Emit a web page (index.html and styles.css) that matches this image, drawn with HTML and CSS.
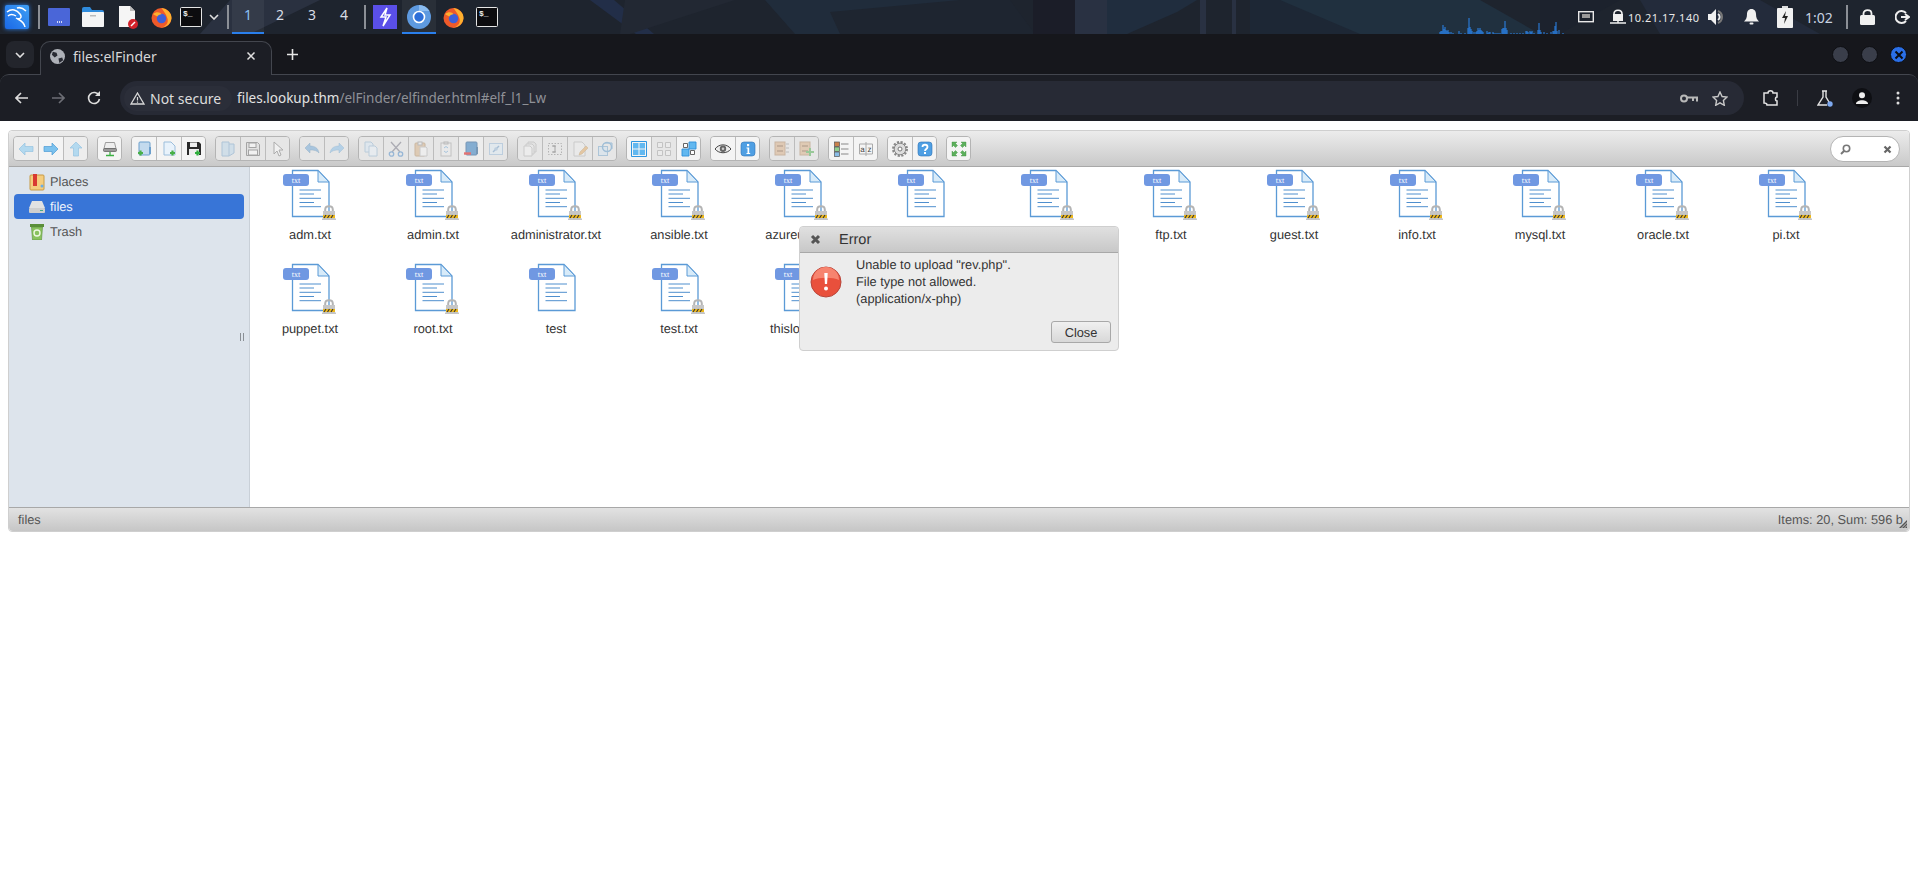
FILE: index.html
```html
<!DOCTYPE html>
<html lang="en">

<head>
    <meta charset="UTF-8">
    <title>files:elFinder</title>
    <link rel="stylesheet" href="styles.css">
</head>

<body>
    <svg class="defs" width="0" height="0">
        <defs>
            <!-- file with tag -->
            <symbol id="file" viewBox="0 0 56 52">
                <path d="M10.5 2.5H36L47 14V48.5H10.5Z" fill="#fff" stroke="#5b9ad6" stroke-width="1.3" />
                <path d="M36 2.5L47 14H36Z" fill="#d8ebf9" stroke="#5b9ad6" />
                <path d="M17.5 22H39M17.5 26H32M17.5 30.3H39M17.5 34.5H32M17.5 38.7H39" stroke="#4f8fce" stroke-width="1" fill="none" />
                <rect x="1" y="6" width="26" height="12" rx="3" fill="#7098e2" />
                <text x="14" y="15" class="tag">txt</text>
            </symbol>
            <symbol id="lock" viewBox="0 0 14 15">
                <path d="M3.2 7V4.5C3.200 0 10.800 0 10.800 4.500V7" fill="none" stroke="#b4b4b4" stroke-width="2" />
                <rect x="1" y="6" width="12" height="8" fill="#c6c6c6" />
                <rect x="1" y="10" width="12" height="3" fill="#eeb91c" />
                <path d="M2 13l2-3M5.500 13l2-3M9 13l2-3" stroke="#333" stroke-width="1.100" />
                <rect x="0" y="13.500" width="14" height="1.500" fill="#c4c4c4" />
            </symbol>

            <!-- toolbar -->
            <symbol id="t-back" viewBox="0 0 16 16"><path d="M1 8l6-6v3.500h8v5H7V14z" fill="#8ccbf0" stroke="#5ca8da" stroke-width=".7" /></symbol>
            <symbol id="t-fwd" viewBox="0 0 16 16"><path d="M15 8L9 2v3.500H1v5h8V14z" fill="#7cc2ee" stroke="#4c9bd4" stroke-width=".7" /></symbol>
            <symbol id="t-up" viewBox="0 0 16 16"><path d="M8 1l6 6h-3.500v8h-5V7H2z" fill="#8ccbf0" stroke="#5ca8da" stroke-width=".7" /></symbol>
            <symbol id="t-net" viewBox="0 0 16 16"><path d="M3.500 1.500h9l1.500 6H2z" fill="#eee" stroke="#888" stroke-width=".8" /><rect x="1.500" y="7.500" width="13" height="3" rx="1" fill="#999" stroke="#666" stroke-width=".8" /><path d="M8 11v3M4 14.500h8" stroke="#3cb043" stroke-width="1.300" /></symbol>
            <symbol id="t-mkdir" viewBox="0 0 16 16"><rect x="3" y="1" width="11" height="13" rx="1" fill="#c3daee" stroke="#6c9fcc" /><path d="M14 6v7" stroke="#6c9fcc" stroke-width="2" /><path d="M4.500 9.500v5M2 12h5" stroke="#48b048" stroke-width="2.200" /></symbol>
            <symbol id="t-mkfile" viewBox="0 0 16 16"><path d="M3 1h7l4 4v9H3z" fill="#e8f2fb" stroke="#9cbedc" /><path d="M11.500 9.500v5M9 12h5" stroke="#48b048" stroke-width="2.200" /></symbol>
            <symbol id="t-upload" viewBox="0 0 16 16"><path d="M1 1h12l2 2v11H1z" fill="#2a2a2a" /><rect x="4" y="1.500" width="7" height="4.500" fill="#eee" /><rect x="3" y="8" width="10" height="6" fill="#eee" /><path d="M11.500 9.500v5M9 12h5" stroke="#2fae3c" stroke-width="2.200" /></symbol>
            <symbol id="t-open" viewBox="0 0 16 16"><path d="M2 1h7v14H2zM9 3h5v9l-5 3" fill="#b7d4ec" stroke="#6d9cc6" /></symbol>
            <symbol id="t-save" viewBox="0 0 16 16"><path d="M1.500 1.500h11l2 2v11h-13z" fill="#ddd" stroke="#555" /><rect x="4" y="2" width="7" height="4.500" fill="#fff" stroke="#555" /><rect x="3.500" y="9" width="9" height="5" fill="#fff" stroke="#555" /></symbol>
            <symbol id="t-cursor" viewBox="0 0 16 16"><path d="M4 1v12l3-3 2 5 2-1-2-5h4z" fill="#fff" stroke="#666" /></symbol>
            <symbol id="t-undo" viewBox="0 0 16 16"><path d="M1 7l5-5v3c5 0 8 2 9 7-2-2.500-5-3-9-3v3z" fill="#5f9ed6" stroke="#37709f" stroke-width=".5" /></symbol>
            <symbol id="t-redo" viewBox="0 0 16 16"><path d="M15 7l-5-5v3c-5 0-8 2-9 7 2-2.500 5-3 9-3v3z" fill="#79b7e6" stroke="#4b8cc0" stroke-width=".5" /></symbol>
            <symbol id="t-copy" viewBox="0 0 16 16"><path d="M2 1h6l2 2v8H2z" fill="#d5e6f5" stroke="#88aece" /><path d="M6 5h6l2 2v8H6z" fill="#e8f2fb" stroke="#88aece" /></symbol>
            <symbol id="t-cut" viewBox="0 0 16 16"><path d="M3 1l9 10M13 1L4 11" stroke="#667" stroke-width="1.300" /><circle cx="3.500" cy="13" r="2.200" fill="none" stroke="#3a7fc4" stroke-width="1.300" /><circle cx="12.500" cy="13" r="2.200" fill="none" stroke="#3a7fc4" stroke-width="1.300" /></symbol>
            <symbol id="t-paste" viewBox="0 0 16 16"><rect x="2" y="2" width="10" height="13" rx="1" fill="#d2a878" stroke="#a97f4f" /><rect x="5" y="1" width="4" height="3" fill="#eee" stroke="#888" /><path d="M7 6h6l1 1v8H7z" fill="#f5f5f5" stroke="#aaa" /></symbol>
            <symbol id="t-empty" viewBox="0 0 16 16"><rect x="3" y="2" width="10" height="13" fill="#eee" stroke="#999" /><rect x="6" y="1" width="4" height="2" fill="#ccc" stroke="#888" /><path d="M6 7l2-1.500L10 7M10 10l-2 1.500L6 10" fill="none" stroke="#5a9bd0" /></symbol>
            <symbol id="t-rm" viewBox="0 0 16 16"><rect x="3" y="1" width="11" height="13" rx="1" fill="#3f83c0" stroke="#2a5f90" /><path d="M14 6v7" stroke="#2a5f90" stroke-width="2" /><path d="M1 12.500h7" stroke="#d22" stroke-width="2.400" /></symbol>
            <symbol id="t-hide" viewBox="0 0 16 16"><rect x="1.500" y="2.500" width="13" height="11" fill="#dcebf7" stroke="#8db3d6" /><path d="M5 11l6-6" stroke="#5c8fc0" stroke-width="1.500" /><circle cx="8" cy="8" r="1.800" fill="#8db3d6" /></symbol>
            <symbol id="t-dup" viewBox="0 0 16 16"><path d="M6 1h6l2 2v8H6z" fill="#dcdcdc" stroke="#aaa" /><path d="M4 3h6l2 2v8H4z" fill="#e8e8e8" stroke="#aaa" /><path d="M2 5h6l2 2v8H2z" fill="#f3f3f3" stroke="#aaa" /></symbol>
            <symbol id="t-rename" viewBox="0 0 16 16"><rect x="1.500" y="2.500" width="13" height="11" fill="none" stroke="#777" stroke-dasharray="1.500 1.500" /><path d="M6 5h2v6H6M5 5h4M5 11h4" fill="none" stroke="#555" /></symbol>
            <symbol id="t-edit" viewBox="0 0 16 16"><path d="M2 1h8l3 3v11H2z" fill="#eee" stroke="#aaa" /><path d="M7 14l1-3 6-6 2 2-6 6z" fill="#e0a050" stroke="#a87830" stroke-width=".5" /></symbol>
            <symbol id="t-resize" viewBox="0 0 16 16"><rect x="1.500" y="5.500" width="9" height="9" fill="#cfe3f3" stroke="#6a9fc8" /><circle cx="10" cy="6" r="4.500" fill="none" stroke="#4c8fc4" stroke-width="1.500" /><path d="M8 2h7v6" fill="none" stroke="#4c8fc4" /></symbol>
            <symbol id="t-all" viewBox="0 0 16 16"><path d="M.5.500h15v15H.5z" fill="none" stroke="#2f96e0" /><path d="M2 2h5.500v5.500H2zM8.500 2H14v5.500H8.500zM2 8.500h5.500V14H2zM8.500 8.500H14V14H8.500z" fill="#62b8f0" /></symbol>
            <symbol id="t-none" viewBox="0 0 16 16"><path d="M1.500 1.500h5v5h-5zM9.500 1.500h5v5h-5zM1.500 9.500h5v5h-5zM9.500 9.500h5v5h-5z" fill="#f0f0f0" stroke="#999" /></symbol>
            <symbol id="t-inv" viewBox="0 0 16 16"><path d="M1 8h7v7H1zM8 1h7v7H8z" fill="#62b8f0" stroke="#2f8fd8" stroke-width=".9" /><path d="M2.500 2.500h4v4h-4zM9.500 9.500h4v4h-4z" fill="#fff" stroke="#555" stroke-width=".9" /></symbol>
            <symbol id="t-eye" viewBox="0 0 16 16"><path d="M0 8c4-5.500 12-5.500 16 0-4 5-12 5-16 0z" fill="#eee" stroke="#444" /><circle cx="8" cy="7.800" r="3.200" fill="#666" /><circle cx="8" cy="7.800" r="1.300" fill="#ccc" /></symbol>
            <symbol id="t-info" viewBox="0 0 16 16"><rect x="1" y="1" width="14" height="14" rx="3" fill="#4f9fe3" stroke="#3174b5" stroke-width=".6" /><rect x="7" y="3" width="2.200" height="2.200" fill="#fff" /><path d="M6.500 6.500h2.700v5.500h1V13H6.500v-1h1V7.500h-1z" fill="#fff" /></symbol>
            <symbol id="t-extract" viewBox="0 0 16 16"><rect x="1" y="1" width="10" height="13" fill="#d8a878" stroke="#a87c50" /><path d="M3 5h6M3 10h6" stroke="#8a5f38" stroke-width="1.500" /><path d="M12 3h3M12 7h3M12 11h3" stroke="#888" /></symbol>
            <symbol id="t-archive" viewBox="0 0 16 16"><rect x="1" y="1" width="10" height="13" fill="#d8a878" stroke="#a87c50" /><path d="M3 5h6M3 10h6" stroke="#8a5f38" stroke-width="1.500" /><path d="M11 7v8M7 11h8" stroke="#3aa53a" stroke-width="2" /></symbol>
            <symbol id="t-view" viewBox="0 0 16 16"><rect x="1.500" y="1" width="5" height="4.500" fill="#c9814c" stroke="#555" stroke-width=".7" /><rect x="1.500" y="6" width="5" height="4.500" fill="#8fd08f" stroke="#555" stroke-width=".7" /><rect x="1.500" y="11" width="5" height="4.500" fill="#8abde8" stroke="#555" stroke-width=".7" /><path d="M8 3h7.500M8 8h7.500M8 13h7.500" stroke="#888" /></symbol>
            <symbol id="t-sort" viewBox="0 0 16 16"><path d="M1.500 3h13v10h-13z" fill="#f5f5f5" stroke="#aaa" /><path d="M8 1v14" stroke="#aaa" /><text x="4.500" y="11" class="sorttxt">a</text><text x="11.500" y="11" class="sorttxt">z</text></symbol>
            <symbol id="t-prefs" viewBox="0 0 16 16"><circle cx="8" cy="8" r="5.800" fill="#ddd" stroke="#888" stroke-width="1" /><circle cx="8" cy="8" r="7" fill="none" stroke="#888" stroke-width="2" stroke-dasharray="2.200 1.500" /><circle cx="8" cy="8" r="2" fill="#fff" stroke="#777" /></symbol>
            <symbol id="t-help" viewBox="0 0 16 16"><rect x="1" y="1" width="14" height="14" rx="3" fill="#4f9fe3" stroke="#3174b5" stroke-width=".6" /><path d="M5.500 6c0-3 5-3 5 0 0 2-2.500 2-2.500 4" fill="none" stroke="#fff" stroke-width="1.800" /><rect x="7" y="11" width="2" height="2" fill="#fff" /></symbol>
            <symbol id="t-full" viewBox="0 0 16 16"><path d="M1 1h5L4.500 2.500l2 2-2 2-2-2L1 6zM15 1v5l-1.500-1.500-2 2-2-2 2-2L10 1zM1 15v-5l1.500 1.500 2-2 2 2-2 2L6 15zM15 15h-5l1.500-1.500-2-2 2-2 2 2L15 10z" fill="#5cb05c" stroke="#3f8f3f" stroke-width=".4" /></symbol>
        </defs>
    </svg>

    <!-- desktop panel -->
    <div class="panel">
        <svg class="wall" width="1918" height="34">
            <path d="M590 0h24l40 34h-18z" fill="#222e48" />
            <path d="M230 0h90l-70 34H200z" fill="#2a3140" />
            <path d="M625 0h110L630 34h-10z" fill="#222833" />
            <path d="M765 0h240l30 34h-240z" fill="#202c3b" />
            <path d="M830 12L960 0h50l25 34H840z" fill="#1e2530" />
            <path d="M1033 0h50v34h-50z" fill="#1b1d28" />
            <path d="M1075 0h32v34h-32zM1200 0h6v34h-6zM1232 0h4v34h-4z" fill="#293142" />
            <path d="M1107 0h90l-20 12-50 22h-20z" fill="#202d3e" />
            <path d="M1250 0h30l110 34h-140z" fill="#1d2735" />
            <path d="M1280 0h200l60 34h-180z" fill="#20303f" />
            <path d="M1540 0h80l-60 34h-20z" fill="#1c222d" />
            <path d="M1640 0h120l60 34h-160z" fill="#232b3b" />
        </svg>

        <svg class="kali" viewBox="0 0 24 24">
            <defs>
                <linearGradient id="kaliBg" x1="0" y1="1" x2="1" y2="0">
                    <stop offset="0" stop-color="#1a68e6" />
                    <stop offset="1" stop-color="#3fa0f5" />
                </linearGradient>
            </defs>
            <rect width="24" height="24" rx="2" fill="url(#kaliBg)" />
            <path d="M2 7C7 3 12 5 15 9c3 4-1 6-4 4 3 2 8 3 9 9M12 3c3-1 6 0 9 3M3 11c2-2 5-2 8 0" fill="none" stroke="#fff" stroke-width="1.500" />
        </svg>
        <span class="vsep sep1"></span>
        <svg class="desk" viewBox="0 0 22 18"><rect width="22" height="18" rx="1" fill="#4a66d8" /><path d="M9 14h5" stroke="#fff" stroke-width="1.500" stroke-dasharray="1 1" /></svg>
        <svg class="folder" viewBox="0 0 22 20"><path d="M0 2q0-2 2-2h6l2 3h10q2 0 2 2v13q0 2-2 2H2q-2 0-2-2z" fill="#2f8bdc" /><rect y="5" width="22" height="15" rx="1" fill="#f4f4f4" /><rect x="8" y="8" width="6" height="1.500" fill="#bbb" /></svg>
        <svg class="doc" viewBox="0 0 20 24"><path d="M1 1h11l5 5v16H1z" fill="#f5f5f5" /><path d="M12 1l5 5h-5z" fill="#bbb" /><circle cx="15" cy="19" r="5" fill="#d3222a" /><path d="M13 21l4-4" stroke="#fff" stroke-width="1.500" /></svg>
        <svg class="fox ff1" viewBox="0 0 20 20"><circle cx="10" cy="10.500" r="9.500" fill="#ef5a2a" /><path d="M10 1c6 1 10 5 9.500 10-.5 5-5 8.500-9.500 8.500 5-1 7-5 5.500-9C14 6 12 4 10 1z" fill="#ffb02e" /><circle cx="10" cy="11" r="4.500" fill="#3f5fd8" /><path d="M2 7c3-3 7-2 8 0-2 0-3 1-4 2z" fill="#ffb02e" /></svg>
        <svg class="term term1" viewBox="0 0 22 20"><rect x=".5" y=".5" width="21" height="19" rx="1" fill="#0c0c0f" stroke="#e5e5e5" /><text x="3" y="9" class="prompt">$_</text></svg>
        <svg class="chev" viewBox="0 0 10 6"><path d="M1 1l4 4 4-4" fill="none" stroke="#ddd" stroke-width="1.600" /></svg>
        <span class="vsep sep2"></span>
        <div class="ws ws-on">1</div>
        <div class="ws">2</div>
        <div class="ws">3</div>
        <div class="ws">4</div>
        <span class="vsep sep3"></span>
        <svg class="burp" viewBox="0 0 24 24"><rect width="24" height="24" fill="#5a4fe8" /><path d="M14 3l-6 9h5l-3 9 7-11h-5z" fill="none" stroke="#fff" stroke-width="1.500" /></svg>
        <div class="chrome-slot">
            <svg class="chrome" viewBox="0 0 24 24"><circle cx="12" cy="12" r="12" fill="#5e9ae0" /><path d="M12 0a12 12 0 0 1 10.400 6H12z" fill="#8bbcf0" /><circle cx="12" cy="12" r="5.500" fill="#2d6fd8" stroke="#fff" stroke-width="1.600" /></svg>
        </div>
        <svg class="fox ff2" viewBox="0 0 20 20"><circle cx="10" cy="10.500" r="9.500" fill="#ef5a2a" /><path d="M10 1c6 1 10 5 9.500 10-.5 5-5 8.500-9.500 8.500 5-1 7-5 5.500-9C14 6 12 4 10 1z" fill="#ffb02e" /><circle cx="10" cy="11" r="4.500" fill="#3f5fd8" /><path d="M2 7c3-3 7-2 8 0-2 0-3 1-4 2z" fill="#ffb02e" /></svg>
        <svg class="term term2" viewBox="0 0 22 20"><rect x=".5" y=".5" width="21" height="19" rx="1" fill="#0c0c0f" stroke="#e5e5e5" /><text x="3" y="9" class="prompt">$_</text></svg>

        <div class="tray">
            <svg class="graph" width="126" height="17" viewBox="0 0 126 17">
                <path d="M1 17v-2M2 17v-3M3 17v-3M4 17v-9M5 17v-5M6 17v-7M7 17v-4M8 17v-3M9 17v-4M10 17v-2M12 17v-2M14 17v-1M20 17v-3M22 17v-1M26 17v-1M29 17v-6M30 17v-16M31 17v-7M32 17v-5M33 17v-3M35 17v-2M37 17v-2M38 17v-3M39 17v-6M40 17v-4M41 17v-6M42 17v-4M43 17v-3M44 17v-2M48 17v-3M49 17v-1M50 17v-2M51 17v-2M54 17v-2M55 17v-1M57 17v-1M59 17v-1M61 17v-1M63 17v-5M64 17v-6M65 17v-6M66 17v-13M67 17v-6M68 17v-4M72 17v-1M75 17v-1M78 17v-1M81 17v-1M84 17v-1M87 17v-3M88 17v-3M89 17v-2M91 17v-3M92 17v-2M93 17v-3M95 17v-1M99 17v-4M100 17v-11M101 17v-4M102 17v-2M105 17v-2M108 17v-1M112 17v-2M114 17v-3M115 17v-3M116 17v-8M117 17v-12M118 17v-3M120 17v-4M124 17v-1" stroke="#2a86f0" stroke-width="1" />
            </svg>
            <svg class="tr-mon" viewBox="0 0 16 12"><rect x=".7" y=".7" width="14.600" height="10" fill="none" stroke="#e8e8e8" stroke-width="1.400" /><path d="M4 3h8v4H4z" fill="#999" /></svg>
            <svg class="tr-net" viewBox="0 0 16 16"><path d="M4 5C4 0 12 0 12 5" fill="none" stroke="#f0f0f0" stroke-width="1.600" /><rect x="3" y="5" width="10" height="7" fill="#f0f0f0" /><path d="M0 14h16M8 12v2" stroke="#f0f0f0" stroke-width="1.500" /></svg>
            <span class="tr-ip">10.21.17.140</span>
            <svg class="tr-vol" viewBox="0 0 17 16"><path d="M0 5h3l5-5v16l-5-5H0z" fill="#f0f0f0" /><path d="M10 2a6.500 6.500 0 0 1 0 12" fill="none" stroke="#777" stroke-width="2" /><path d="M10 5a3.500 3.500 0 0 1 0 6" fill="none" stroke="#f0f0f0" stroke-width="2" /></svg>
            <svg class="tr-bell" viewBox="0 0 15 16"><path d="M7.500 0c3 0 4.500 2.500 4.500 5 0 4 1 5.500 3 7.500H0c2-2 3-3.500 3-7.500C3 2.500 4.500 0 7.500 0z" fill="#f0f0f0" /><rect x="5.500" y="13.500" width="4" height="2" rx="1" fill="#f0f0f0" /></svg>
            <svg class="tr-bat" viewBox="0 0 16 22"><rect x="5" y="0" width="6" height="2" fill="#ddd" /><rect y="2" width="16" height="20" rx="1" fill="#f0f0f0" /><path d="M9 5l-4 7h3l-1 6 4-8H8z" fill="#222" /></svg>
            <span class="tr-time">1:02</span>
            <span class="vsep sep4"></span>
            <svg class="tr-lock" viewBox="0 0 15 16"><path d="M3.500 7V4.500c0-4.500 8-4.500 8 0V7" fill="none" stroke="#f0f0f0" stroke-width="1.800" /><rect y="6" width="15" height="10" rx="1.500" fill="#f0f0f0" /></svg>
            <svg class="tr-out" viewBox="0 0 15 14"><path d="M11 3A6 6 0 1 0 11 11" fill="none" stroke="#eee" stroke-width="2" /><path d="M6 7h7M10 4l4 3-4 3" fill="none" stroke="#eee" stroke-width="2" /></svg>
        </div>
    </div>

    <!-- browser -->
    <div class="browser">
        <div class="tabbar">
            <div class="tabs-menu"><svg width="10" height="6" viewBox="0 0 10 6"><path d="M1 1l4 4 4-4" fill="none" stroke="#e0e0e0" stroke-width="1.600" /></svg></div>
            <div class="tab">
                <svg class="globe" width="15" height="15" viewBox="0 0 16 16"><circle cx="8" cy="8" r="8" fill="#aeb1b8" /><path d="M3 3l4 1 1 3-3 2-3-3zM9 10l4-1 1 3-4 3z" fill="#282a33" /></svg>
                <span class="tab-title">files:elFinder</span>
                <svg class="tab-x" width="10" height="10" viewBox="0 0 10 10"><path d="M1.500 1.500l7 7M8.500 1.500l-7 7" stroke="#e0e0e0" stroke-width="1.500" /></svg>
            </div>
            <svg class="newtab" width="11" height="11" viewBox="0 0 11 11"><path d="M5.500 0v11M0 5.500h11" stroke="#e6e6e6" stroke-width="1.600" /></svg>
            <div class="winbtns">
                <span class="winbtn"></span>
                <span class="winbtn"></span>
                <span class="winbtn winbtn-x"><svg width="10" height="10" viewBox="0 0 10 10"><path d="M1.500 1.500l7 7M8.500 1.500l-7 7" stroke="#0b0d14" stroke-width="2" /></svg></span>
            </div>
        </div>
        <div class="urlbar">
            <svg class="nav nav-back" width="14" height="12" viewBox="0 0 14 12"><path d="M6 1L1 6l5 5M1 6h12" fill="none" stroke="#dedede" stroke-width="1.600" /></svg>
            <svg class="nav nav-fwd" width="14" height="12" viewBox="0 0 14 12"><path d="M8 1l5 5-5 5M13 6H1" fill="none" stroke="#6c6e75" stroke-width="1.600" /></svg>
            <svg class="nav nav-load" width="14" height="14" viewBox="0 0 14 14"><path d="M12 4.500A5.500 5.500 0 1 0 12.500 8" fill="none" stroke="#dedede" stroke-width="1.600" /><path d="M13 0v5H8z" fill="#dedede" /></svg>
            <div class="omni">
                <div class="chip">
                    <svg width="15" height="13" viewBox="0 0 15 13"><path d="M7.500 1L14 12H1z" fill="none" stroke="#d8d8d8" stroke-width="1.300" /><path d="M7.500 5v3.500M7.500 9.500v1.300" stroke="#d8d8d8" stroke-width="1.200" /></svg>
                    <span>Not secure</span>
                </div>
                <div class="url"><span class="host">files.lookup.thm</span>/elFinder/elfinder.html#elf_l1_Lw</div>
                <svg class="om-key" width="18" height="9" viewBox="0 0 18 9"><circle cx="4" cy="4.500" r="3" fill="none" stroke="#b8b8b8" stroke-width="2" /><path d="M7 3.500h10v4M13 4v3" fill="none" stroke="#b8b8b8" stroke-width="2" /></svg>
                <svg class="om-star" width="16" height="15" viewBox="0 0 16 15"><path d="M8 1l2.100 4.500 4.900.6-3.600 3.400.9 4.800L8 11.900 3.700 14.300l.9-4.800L1 6.100l4.900-.6z" fill="none" stroke="#c8c8c8" stroke-width="1.400" /></svg>
            </div>
            <svg class="br-ext" width="16" height="16" viewBox="0 0 16 16"><path d="M1 3h4c0-3 5-3 5 0h4v4c-2 0-2 4 0 4v4H4c0-2-3-2-3-2z" fill="none" stroke="#e2e2e2" stroke-width="1.500" /></svg>
            <span class="br-div"></span>
            <svg class="br-lab" width="16" height="17" viewBox="0 0 16 17"><path d="M5 1h5M6 1v6L1 15h9M9 1v6l3 5" fill="none" stroke="#e2e2e2" stroke-width="1.400" /><circle cx="13" cy="14" r="2.700" fill="#7ea9f0" /></svg>
            <span class="br-avatar"><svg width="12" height="12" viewBox="0 0 12 12"><circle cx="6" cy="3.200" r="3" fill="#eee" /><path d="M0 12c0-5 12-5 12 0z" fill="#eee" /></svg></span>
            <svg class="br-dots" width="4" height="14" viewBox="0 0 4 14"><circle cx="2" cy="2" r="1.500" fill="#ddd" /><circle cx="2" cy="7" r="1.500" fill="#ddd" /><circle cx="2" cy="12" r="1.500" fill="#ddd" /></svg>
        </div>
    </div>

    <!-- elFinder -->
    <div class="page">
        <div class="elfinder">
            <div class="elf-toolbar">
                <div class="btn-group">
                    <span class="tbtn off-soft"><svg><use href="#t-back" /></svg></span>
                    <span class="tbtn on"><svg><use href="#t-fwd" /></svg></span>
                    <span class="tbtn off-soft"><svg><use href="#t-up" /></svg></span>
                </div>
                <div class="btn-group"><span class="tbtn on"><svg><use href="#t-net" /></svg></span></div>
                <div class="btn-group">
                    <span class="tbtn on"><svg><use href="#t-mkdir" /></svg></span>
                    <span class="tbtn on"><svg><use href="#t-mkfile" /></svg></span>
                    <span class="tbtn on"><svg><use href="#t-upload" /></svg></span>
                </div>
                <div class="btn-group">
                    <span class="tbtn off"><svg><use href="#t-open" /></svg></span>
                    <span class="tbtn off"><svg><use href="#t-save" /></svg></span>
                    <span class="tbtn off"><svg><use href="#t-cursor" /></svg></span>
                </div>
                <div class="btn-group">
                    <span class="tbtn off"><svg><use href="#t-undo" /></svg></span>
                    <span class="tbtn off"><svg><use href="#t-redo" /></svg></span>
                </div>
                <div class="btn-group">
                    <span class="tbtn off"><svg><use href="#t-copy" /></svg></span>
                    <span class="tbtn off"><svg><use href="#t-cut" /></svg></span>
                    <span class="tbtn off"><svg><use href="#t-paste" /></svg></span>
                    <span class="tbtn off"><svg><use href="#t-empty" /></svg></span>
                    <span class="tbtn off-soft"><svg><use href="#t-rm" /></svg></span>
                    <span class="tbtn off"><svg><use href="#t-hide" /></svg></span>
                </div>
                <div class="btn-group">
                    <span class="tbtn off"><svg><use href="#t-dup" /></svg></span>
                    <span class="tbtn off"><svg><use href="#t-rename" /></svg></span>
                    <span class="tbtn off"><svg><use href="#t-edit" /></svg></span>
                    <span class="tbtn off"><svg><use href="#t-resize" /></svg></span>
                </div>
                <div class="btn-group">
                    <span class="tbtn on"><svg><use href="#t-all" /></svg></span>
                    <span class="tbtn off"><svg><use href="#t-none" /></svg></span>
                    <span class="tbtn on"><svg><use href="#t-inv" /></svg></span>
                </div>
                <div class="btn-group">
                    <span class="tbtn on"><svg><use href="#t-eye" /></svg></span>
                    <span class="tbtn on"><svg><use href="#t-info" /></svg></span>
                </div>
                <div class="btn-group">
                    <span class="tbtn off"><svg><use href="#t-extract" /></svg></span>
                    <span class="tbtn off"><svg><use href="#t-archive" /></svg></span>
                </div>
                <div class="btn-group">
                    <span class="tbtn on"><svg><use href="#t-view" /></svg></span>
                    <span class="tbtn on"><svg><use href="#t-sort" /></svg></span>
                </div>
                <div class="btn-group">
                    <span class="tbtn on"><svg><use href="#t-prefs" /></svg></span>
                    <span class="tbtn on"><svg><use href="#t-help" /></svg></span>
                </div>
                <div class="btn-group"><span class="tbtn on"><svg><use href="#t-full" /></svg></span></div>
                <div class="search">
                    <svg width="11" height="11" viewBox="0 0 11 11"><circle cx="6.500" cy="4.500" r="3.200" fill="#fff" stroke="#777" stroke-width="1.600" /><path d="M4 7l-3 3" stroke="#777" stroke-width="2" /></svg>
                    <svg width="9" height="9" viewBox="0 0 9 9"><path d="M1.500 1.500l6 6M7.500 1.500l-6 6" stroke="#666" stroke-width="2.200" /></svg>
                </div>
            </div>

            <div class="elf-body">
                <div class="sidebar">
                    <div class="tree-row">
                        <svg width="16" height="18" viewBox="0 0 16 18"><rect x="1" y="2" width="14" height="15" rx="1" fill="#f5cd7e" stroke="#c79a45" /><rect x="4" y="1" width="4" height="12" fill="#d93a32" /><circle cx="13" cy="13" r="1.500" fill="#6aaee6" /></svg>
                        <span>Places</span>
                    </div>
                    <div class="tree-row tree-sel">
                        <svg width="16" height="12" viewBox="0 0 16 12"><path d="M3 0h10l3 7H0z" fill="#e2e2e2" /><rect y="7" width="16" height="5" rx="1" fill="#cfcfcf" /><rect x="11" y="9" width="3" height="1" fill="#4a8" /></svg>
                        <span>files</span>
                    </div>
                    <div class="tree-row">
                        <svg width="14" height="16" viewBox="0 0 14 16"><rect x="0" y="0" width="14" height="3" fill="#5b8f3a" /><path d="M1.500 3h11l-1 13h-9z" fill="#89c25e" stroke="#5b8f3a" stroke-width=".6" /><circle cx="7" cy="9" r="3" fill="none" stroke="#eef7e2" stroke-width="1.400" /></svg>
                        <span>Trash</span>
                    </div>
                    <span class="handle"></span>
                </div>
                <div class="files">
                    <div class="file"><span class="icon"><svg class="ficon"><use href="#file" /></svg><svg class="flock"><use href="#lock" /></svg></span><span class="fname">adm.txt</span></div>
                    <div class="file"><span class="icon"><svg class="ficon"><use href="#file" /></svg><svg class="flock"><use href="#lock" /></svg></span><span class="fname">admin.txt</span></div>
                    <div class="file"><span class="icon"><svg class="ficon"><use href="#file" /></svg><svg class="flock"><use href="#lock" /></svg></span><span class="fname">administrator.txt</span></div>
                    <div class="file"><span class="icon"><svg class="ficon"><use href="#file" /></svg><svg class="flock"><use href="#lock" /></svg></span><span class="fname">ansible.txt</span></div>
                    <div class="file"><span class="icon"><svg class="ficon"><use href="#file" /></svg><svg class="flock"><use href="#lock" /></svg></span><span class="fname">azureuser.txt</span></div>
                    <div class="file"><span class="icon"><svg class="ficon"><use href="#file" /></svg></span><span class="fname">credentials.txt</span></div>
                    <div class="file"><span class="icon"><svg class="ficon"><use href="#file" /></svg><svg class="flock"><use href="#lock" /></svg></span><span class="fname">ec2-user.txt</span></div>
                    <div class="file"><span class="icon"><svg class="ficon"><use href="#file" /></svg><svg class="flock"><use href="#lock" /></svg></span><span class="fname">ftp.txt</span></div>
                    <div class="file"><span class="icon"><svg class="ficon"><use href="#file" /></svg><svg class="flock"><use href="#lock" /></svg></span><span class="fname">guest.txt</span></div>
                    <div class="file"><span class="icon"><svg class="ficon"><use href="#file" /></svg><svg class="flock"><use href="#lock" /></svg></span><span class="fname">info.txt</span></div>
                    <div class="file"><span class="icon"><svg class="ficon"><use href="#file" /></svg><svg class="flock"><use href="#lock" /></svg></span><span class="fname">mysql.txt</span></div>
                    <div class="file"><span class="icon"><svg class="ficon"><use href="#file" /></svg><svg class="flock"><use href="#lock" /></svg></span><span class="fname">oracle.txt</span></div>
                    <div class="file"><span class="icon"><svg class="ficon"><use href="#file" /></svg><svg class="flock"><use href="#lock" /></svg></span><span class="fname">pi.txt</span></div>
                    <div class="file"><span class="icon"><svg class="ficon"><use href="#file" /></svg><svg class="flock"><use href="#lock" /></svg></span><span class="fname">puppet.txt</span></div>
                    <div class="file"><span class="icon"><svg class="ficon"><use href="#file" /></svg><svg class="flock"><use href="#lock" /></svg></span><span class="fname">root.txt</span></div>
                    <div class="file"><span class="icon"><svg class="ficon"><use href="#file" /></svg></span><span class="fname">test</span></div>
                    <div class="file"><span class="icon"><svg class="ficon"><use href="#file" /></svg><svg class="flock"><use href="#lock" /></svg></span><span class="fname">test.txt</span></div>
                    <div class="file"><span class="icon"><svg class="ficon"><use href="#file" /></svg></span><span class="fname">thislogin.txt</span></div>
                </div>
            </div>

            <div class="elf-status">
                <span>files</span>
                <span class="status-r">Items: 20, Sum: 596 b</span>
                <svg class="grip" width="8" height="8" viewBox="0 0 8 8"><path d="M8 0v2L2 8H0zM8 3v2L5 8H3zM8 6v2H6z" fill="#555" /></svg>
            </div>

            <div class="dialog">
                <div class="dlg-title">
                    <svg width="11" height="11" viewBox="0 0 11 11"><path d="M2 2l7 7M9 2L2 9" stroke="#555" stroke-width="3" /></svg>
                    <span>Error</span>
                </div>
                <div class="dlg-body">
                    <svg class="dlg-icon" width="32" height="32" viewBox="0 0 32 32">
                        <circle cx="16" cy="16" r="15" fill="#e9503c" stroke="#b8453a" />
                        <path d="M3 14a13 13 0 0 1 26 0c-6-3-20-3-26 0z" fill="#f7846f" />
                        <path d="M14.300 7h3.400l-.6 11h-2.200z" fill="#fff" />
                        <circle cx="16" cy="22.500" r="2" fill="#fff" />
                    </svg>
                    <div class="dlg-msg">Unable to upload "rev.php".<br>File type not allowed.<br>(application/x-php)</div>
                </div>
                <div class="dlg-foot"><button class="dlg-btn">Close</button></div>
            </div>
        </div>
    </div>
</body>

</html>
```
FILE: styles.css
```css
* {
    margin: 0;
    padding: 0;
    box-sizing: border-box;
}

html,
body {
    width: 1918px;
    height: 878px;
    overflow: hidden;
    background: #fff;
}

body {
    font-family: "Liberation Sans", Arial, sans-serif;
}

svg {
    display: block;
    flex: none;
}

.defs {
    position: absolute;
}

.tag {
    font: 8px "Liberation Serif", serif;
    fill: #fff;
    text-anchor: middle;
}

.sorttxt {
    font: 8px "Liberation Sans", sans-serif;
    fill: #444;
    text-anchor: middle;
}

.prompt {
    font: bold 8px "Liberation Mono", monospace;
    fill: #eee;
}

/* desktop panel */
.panel {
    position: relative;
    height: 34px;
    background: #1e242e;
    display: flex;
    align-items: center;
    color: #e8e8e8;
    font-family: "Noto Sans", sans-serif;
}

.panel > *:not(.wall) {
    position: relative;
}

.panel > .wall {
    position: absolute;
    left: 0;
    top: 0;
}

.vsep {
    width: 2px;
    height: 24px;
    background: #8b8f96;
}

.kali { width: 24px; height: 24px; margin-left: 5px; filter: drop-shadow(0 0 2px #2a7fec); }
.sep1 { margin-left: 9px; }
.desk { width: 22px; height: 18px; margin-left: 8px; }
.folder { width: 22px; height: 20px; margin-left: 12px; }
.doc { width: 20px; height: 24px; margin-left: 14px; }
.fox { width: 21px; height: 21px; }
.ff1 { margin-left: 13px; }
.term { width: 22px; height: 20px; }
.term1 { margin-left: 8px; }
.chev { width: 10px; height: 6px; margin-left: 7px; }
.sep2 { margin-left: 8px; }

.ws {
    width: 32px;
    height: 34px;
    line-height: 30px;
    text-align: center;
    font-size: 14px;
    color: #d8dde6;
    border-bottom: 2px solid transparent;
}

.sep2 + .ws { margin-left: 3px; }

.ws-on {
    color: #8cc0f5;
    background: rgba(255, 255, 255, .05);
    border-bottom-color: #2a7fec;
}

.sep3 { margin-left: 4px; }
.burp { width: 24px; height: 24px; margin-left: 7px; }

.chrome-slot {
    width: 34px;
    height: 34px;
    margin-left: 5px;
    padding: 5px;
    background: rgba(255, 255, 255, .05);
    border-bottom: 2px solid #2a7fec;
}

.chrome { width: 24px; height: 24px; }
.ff2 { margin-left: 7px; }
.term2 { margin-left: 12px; }

.tray {
    margin-left: auto;
    padding-right: 8px;
    height: 34px;
    display: flex;
    align-items: center;
}

.graph { align-self: flex-end; }
.tr-mon { width: 16px; height: 12px; margin-left: 13px; }
.tr-net { width: 16px; height: 16px; margin-left: 16px; }

.tr-ip {
    width: 72px;
    margin-left: 2px;
    font-size: 11px;
    letter-spacing: .5px;
    white-space: nowrap;
}

.tr-vol { width: 17px; height: 16px; margin-left: 8px; }
.tr-bell { width: 15px; height: 16px; margin-left: 19px; }
.tr-bat { width: 16px; height: 22px; margin-left: 18px; }

.tr-time {
    width: 28px;
    margin-left: 12px;
    font-size: 14px;
    color: #c8d2e0;
    white-space: nowrap;
}

.sep4 { margin-left: 13px; }
.tr-lock { width: 15px; height: 16px; margin-left: 12px; }
.tr-out { width: 15px; height: 14px; margin-left: 20px; }

/* browser chrome */
.browser {
    background: #16171c;
}

.tabbar {
    height: 40px;
    display: flex;
    align-items: flex-end;
    padding-left: 6px;
    font-family: "Noto Sans", sans-serif;
}

.tabs-menu {
    width: 28px;
    height: 27px;
    margin-bottom: 6px;
    border-radius: 8px;
    background: #23252c;
    display: flex;
    align-items: center;
    justify-content: center;
}

.tab {
    position: relative;
    z-index: 1;
    width: 232px;
    height: 34px;
    margin-left: 6px;
    margin-bottom: -1px;
    padding: 0 15px 5px 9px;
    border: 1px solid #43464e;
    border-bottom: 0;
    border-radius: 10px 10px 0 0;
    background: #1c1e25;
    display: flex;
    align-items: center;
    color: #d6d6d8;
    font-size: 14px;
}

.tab-title {
    margin-left: 8px;
    flex: 1;
}

.newtab {
    margin: 0 0 14px 15px;
}

.winbtns {
    margin-left: auto;
    height: 40px;
    padding-right: 11px;
    padding-bottom: 2px;
    display: flex;
    align-items: flex-end;
    gap: 12px;
}

.winbtn {
    width: 17px;
    height: 17px;
    margin-bottom: 9px;
    border-radius: 50%;
    background: #3a3e4a;
    border: 1px solid #0d0e12;
    display: flex;
    align-items: center;
    justify-content: center;
}

.winbtn-x {
    background: #2a6fe8;
}

.urlbar {
    height: 47px;
    background: #1c1e25;
    border-top: 1px solid #43464e;
    border-radius: 9px 9px 0 0;
    display: flex;
    align-items: center;
    color: #dcdcdc;
    font-family: "Noto Sans", sans-serif;
    font-size: 14px;
}

.nav-back { margin-left: 15px; }
.nav-fwd { margin-left: 22px; }
.nav-load { margin-left: 22px; }

.omni {
    width: 1624px;
    height: 34px;
    margin-left: 19px;
    border-radius: 17px;
    background: #272a35;
    display: flex;
    align-items: center;
}

.chip {
    width: 108px;
    height: 25px;
    margin-left: 4px;
    padding-left: 6px;
    border-radius: 13px;
    background: #2b2e39;
    display: flex;
    align-items: center;
    gap: 5px;
}

.url {
    margin-left: 5px;
    flex: 1;
    color: #8f9197;
    font-size: 13.5px;
}

.host {
    color: #e2e2e2;
}

.om-star { margin: 0 16px 0 14px; }

.br-ext { margin-left: 19px; }

.br-div {
    width: 1px;
    height: 16px;
    margin-left: 18px;
    background: #3a3c44;
}

.br-lab { margin-left: 19px; }

.br-avatar {
    width: 20px;
    height: 20px;
    margin-left: 19px;
    border-radius: 50%;
    background: #0e0f13;
    display: flex;
    align-items: center;
    justify-content: center;
}

.br-dots { margin-left: 24px; }

/* elFinder */
.page {
    padding: 9px 8px 0;
}

.elfinder {
    position: relative;
    height: 402px;
    width: 1902px;
    border: 1px solid #cfcfcf;
    border-radius: 4px;
    display: flex;
    flex-direction: column;
    font-size: 12.8px;
    text-rendering: geometricPrecision;
    color: #333;
}

.elf-toolbar {
    height: 36px;
    padding: 5px 0 0 4px;
    background: linear-gradient(#ececec, #c9c9c9);
    border-bottom: 1px solid #a8a8a8;
    border-radius: 4px 4px 0 0;
    display: flex;
    align-items: flex-start;
    gap: 9px;
}

.btn-group {
    display: flex;
    height: 25px;
    border: 1px solid #b4b4b4;
    border-radius: 4px;
    overflow: hidden;
}

.tbtn {
    width: 25px;
    height: 23px;
    border-right: 1px solid #bcbcbc;
    background: #f4f4f4;
    display: flex;
    align-items: center;
    justify-content: center;
}

.tbtn:last-child {
    border-right: 0;
    width: 23px;
}

.tbtn svg {
    width: 16px;
    height: 16px;
}

.off {
    background: #e6e6e6;
}

.off svg {
    opacity: .45;
}

.off-soft {
    background: #ededed;
}

.off-soft svg {
    opacity: .6;
}

.search {
    width: 70px;
    height: 26px;
    margin-left: auto;
    margin-right: 9px;
    padding: 0 7px 0 9px;
    background: #fff;
    border: 1px solid #b4b4b4;
    border-radius: 13px;
    display: flex;
    align-items: center;
    justify-content: space-between;
}

.elf-body {
    flex: 1;
    display: flex;
    overflow: hidden;
    background: #fff;
}

.sidebar {
    position: relative;
    width: 241px;
    padding: 2px 5px;
    background: #dde4ec;
    border-right: 1px solid #c9d0d8;
    color: #555;
}

.tree-row {
    height: 25px;
    padding-left: 15px;
    border-radius: 4px;
    display: flex;
    align-items: center;
    gap: 5px;
}

.tree-row svg {
    width: 16px;
}

.tree-sel {
    background: #3875d7;
    color: #eef3fb;
}

.handle {
    position: absolute;
    right: 5px;
    top: 166px;
    width: 4px;
    height: 8px;
    border: 1px solid #8a8f95;
    border-top: 0;
    border-bottom: 0;
}

.files {
    flex: 1;
    display: flex;
    flex-wrap: wrap;
    align-content: flex-start;
    column-gap: 3px;
}

.file {
    width: 120px;
    height: 94px;
    padding-top: 1px;
    display: flex;
    flex-direction: column;
    align-items: center;
}

.icon {
    position: relative;
    width: 56px;
    height: 52px;
}

.ficon {
    width: 56px;
    height: 52px;
}

.flock {
    position: absolute;
    left: 40px;
    top: 37px;
    width: 14px;
    height: 15px;
}

.fname {
    margin-top: 7px;
    line-height: 15px;
    white-space: nowrap;
}

.elf-status {
    position: relative;
    height: 24px;
    padding: 0 6px 0 9px;
    background: linear-gradient(#e2e2e2, #c6c6c6);
    border-top: 1px solid #a8a8a8;
    border-radius: 0 0 4px 4px;
    display: flex;
    align-items: center;
    justify-content: space-between;
    color: #555;
}

.grip {
    position: absolute;
    right: 2px;
    bottom: 3px;
}

/* error dialog */
.dialog {
    position: absolute;
    left: 790px;
    top: 95px;
    width: 320px;
    height: 125px;
    background: #ececec;
    border: 1px solid #cfcfcf;
    border-radius: 4px;
    display: flex;
    flex-direction: column;
}

.dlg-title {
    height: 26px;
    padding-left: 10px;
    background: linear-gradient(#e0e0e0, #c8c8c8);
    border-bottom: 1px solid #a8a8a8;
    border-radius: 4px 4px 0 0;
    display: flex;
    align-items: center;
    gap: 18px;
    font-size: 14.5px;
}

.dlg-body {
    flex: 1;
    padding: 3px 0 0 10px;
    display: flex;
}

.dlg-icon {
    margin-top: 10px;
}

.dlg-msg {
    margin-left: 14px;
    line-height: 17px;
}

.dlg-foot {
    padding: 0 7px 7px 0;
    display: flex;
    justify-content: flex-end;
}

.dlg-btn {
    width: 60px;
    height: 22px;
    font: 12.8px "Liberation Sans", sans-serif;
    color: #333;
    background: linear-gradient(#f0f0f0, #d8d8d8);
    border: 1px solid #a8a8a8;
    border-radius: 3px;
}
```
